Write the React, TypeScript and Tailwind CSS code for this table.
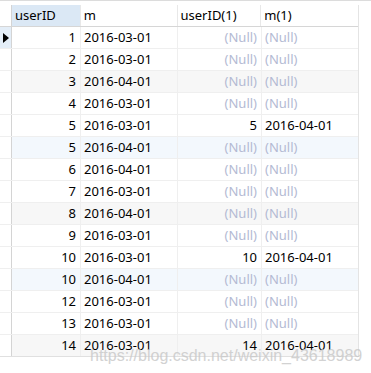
import React from 'react';

type Row = { id: number; m: string; id1: number | null; m1: string | null; bg?: 'gray' | 'blue' };

const rows: Row[] = [
  { id: 1, m: '2016-03-01', id1: null, m1: null },
  { id: 2, m: '2016-03-01', id1: null, m1: null },
  { id: 3, m: '2016-04-01', id1: null, m1: null, bg: 'gray' },
  { id: 4, m: '2016-03-01', id1: null, m1: null },
  { id: 5, m: '2016-03-01', id1: 5, m1: '2016-04-01' },
  { id: 5, m: '2016-04-01', id1: null, m1: null, bg: 'blue' },
  { id: 6, m: '2016-04-01', id1: null, m1: null },
  { id: 7, m: '2016-03-01', id1: null, m1: null },
  { id: 8, m: '2016-04-01', id1: null, m1: null, bg: 'gray' },
  { id: 9, m: '2016-03-01', id1: null, m1: null },
  { id: 10, m: '2016-03-01', id1: 10, m1: '2016-04-01' },
  { id: 10, m: '2016-04-01', id1: null, m1: null, bg: 'blue' },
  { id: 12, m: '2016-03-01', id1: null, m1: null },
  { id: 13, m: '2016-03-01', id1: null, m1: null },
  { id: 14, m: '2016-03-01', id1: 14, m1: '2016-04-01', bg: 'gray' },
];

const Null = () => <span className="text-[#b3bad3]">(Null)</span>;

export default function App() {
  return (
    <div
      className="relative w-[371px] h-[373px] bg-white overflow-hidden text-[13px] text-black"
      style={{ fontFamily: '"Noto Sans", "Liberation Sans", sans-serif' }}
    >
      <div className="h-[5px] border-t border-[#dcdcdc]" />

      <div className="w-[359px] border-r border-[#e4e4e4]">
        {/* header */}
        <div className="flex h-[22px] border-b border-[#d6d6d6] leading-[21px]">
          <div className="w-[12px] border-r border-[#d4d4d4]" />
          <div className="w-[69px] px-[3px] bg-[#dbe8f5] border-r border-[#e8e8e8]">userID</div>
          <div className="w-[97px] px-[3px] border-r border-[#e8e8e8]">m</div>
          <div className="w-[84px] px-[3px] border-r border-[#e8e8e8]">userID(1)</div>
          <div className="w-[97px] px-[3px]">m(1)</div>
        </div>

        {rows.map((r, i) => {
          const bg = r.bg === 'gray' ? 'bg-[#f7f7f7]' : r.bg === 'blue' ? 'bg-[#f3f8fd]' : 'bg-white';
          return (
            <div
              key={i}
              className={`flex h-[22px] leading-[21px] border-b ${i === rows.length - 1 ? 'border-[#e0e0e0]' : 'border-[#efefef]'}`}
            >
              <div
                className={`w-[12px] border-r border-[#d4d4d4] flex items-center justify-center ${i === 0 ? 'bg-[#e4eef8]' : 'bg-white'}`}
              >
                {i === 0 && (
                  <svg width="6" height="10" viewBox="0 0 6 10">
                    <path d="M0 0 L6 5 L0 10 Z" fill="#000" />
                  </svg>
                )}
              </div>
              <div className={`flex flex-1 ${bg}`}>
                <div className="w-[69px] px-[4px] text-right border-r border-[#efefef]">{r.id}</div>
                <div className="w-[97px] px-[3px] border-r border-[#efefef]">{r.m}</div>
                <div className="w-[84px] px-[4px] text-right border-r border-[#efefef]">
                  {r.id1 === null ? <Null /> : r.id1}
                </div>
                <div className="w-[96px] px-[3px]">{r.m1 === null ? <Null /> : r.m1}</div>
              </div>
            </div>
          );
        })}
      </div>

      {/* watermark */}
      <div
        className="absolute left-[90px] top-[346px] text-[16px] leading-[19px] text-[#c8c8c8] opacity-80 whitespace-nowrap"
        style={{ fontFamily: '"Liberation Sans", Arial, sans-serif' }}
      >
        https://blog.csdn.net/weixin_43618989
      </div>
    </div>
  );
}
